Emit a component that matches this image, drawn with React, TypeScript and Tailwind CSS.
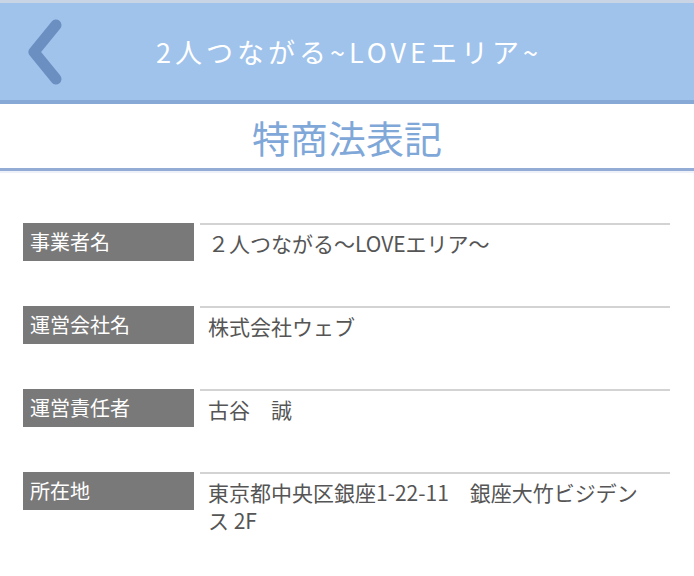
import React from 'react';

const rows = [
  { label: '事業者名', value: '２人つながる〜LOVEエリア〜' },
  { label: '運営会社名', value: '株式会社ウェブ' },
  { label: '運営責任者', value: '古谷　誠' },
  { label: '所在地', value: '東京都中央区銀座1-22-11　銀座大竹ビジデンス 2F' },
];

const font = { fontFamily: '"Noto Sans CJK JP", "Noto Sans", sans-serif' };

export default function App() {
  return (
    <div className="w-[694px] min-h-[576px] bg-white" style={font}>
      {/* Header */}
      <header className="border-t-[3px] border-t-[#c9d5e4] bg-[#a0c3ec] border-b-4 border-b-[#87a9d5]">
        <div className="relative flex h-[97px] items-center justify-center">
          <button className="absolute left-[22px] top-[10px] p-1">
            <svg width="40" height="70" viewBox="0 0 40 70" fill="none">
              <polyline
                points="30,8 8,35 30,62"
                stroke="#6b8fc1"
                strokeWidth="11"
                strokeLinecap="round"
                strokeLinejoin="round"
              />
            </svg>
          </button>
          <h1 className="pl-[4px] text-[27px] leading-none text-white tracking-[4px]">2人つながる~LOVEエリア~</h1>
        </div>
      </header>

      {/* Page title */}
      <div className="flex h-[64px] items-center justify-center">
        <h2 className="text-[38px] leading-none text-[#7fa8d8] pt-[2px]">特商法表記</h2>
      </div>
      <div className="h-[3px] bg-[#92acd6]" />
      <div className="h-[2px] bg-[#eef2f8]" />

      {/* Table */}
      <div className="flex flex-col gap-[45px] pl-[23px] pr-[24px] pt-[50px]">
        {rows.map((r) => (
          <div key={r.label} className="flex items-start gap-[6px]">
            <div className="flex h-[38px] w-[171px] shrink-0 items-center bg-[#797979] pl-[7px] text-[20px] text-white">
              {r.label}
            </div>
            <div className="flex-1 border-t-2 border-[#d3d3d3] pl-[8px] pr-[24px] pt-[4px] text-[21px] leading-[28px] text-[#555]">
              {r.value}
            </div>
          </div>
        ))}
      </div>
    </div>
  );
}
